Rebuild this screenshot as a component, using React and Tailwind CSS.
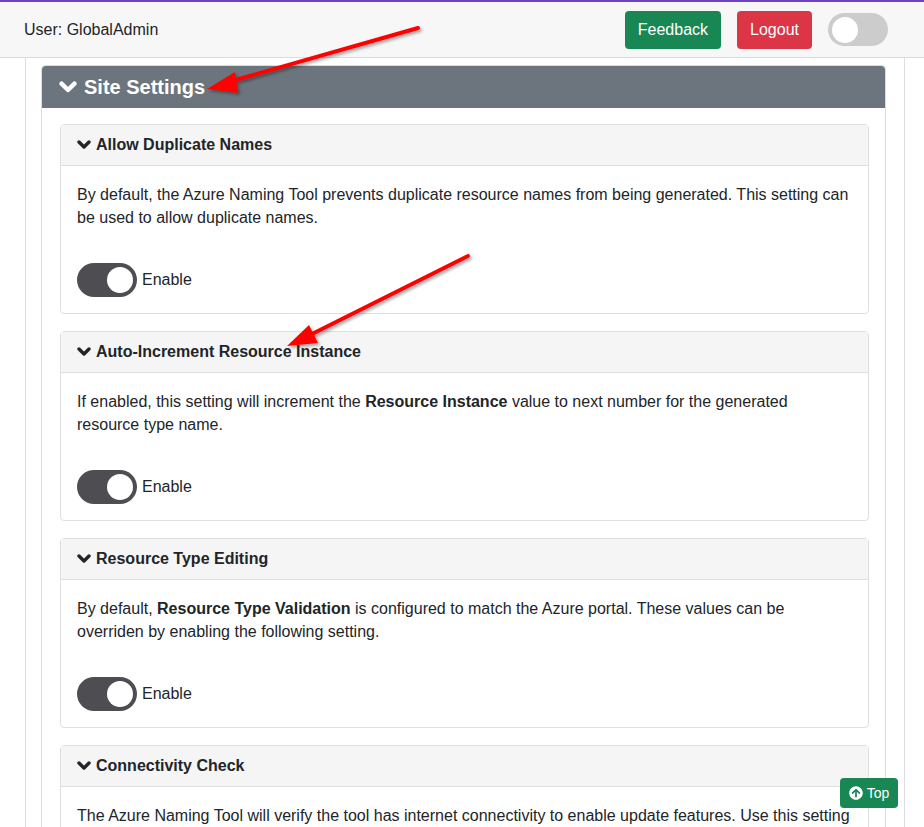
import React from 'react';
import { FaArrowCircleUp } from 'react-icons/fa';

function Chevron({ className }) {
  return (
    <svg className={className} viewBox="0 0 14 10" fill="none">
      <polyline points="2,2 7,7 12,2" stroke="currentColor" strokeWidth="3.4" strokeLinecap="round" strokeLinejoin="round" />
    </svg>
  );
}

function Toggle() {
  return (
    <div className="flex items-center">
      <div className="w-[60px] h-[34px] rounded-full bg-[#4d4d52] flex items-center justify-end pr-[4px]">
        <div className="w-[26px] h-[26px] rounded-full bg-white"></div>
      </div>
      <span className="ml-[5px]">Enable</span>
    </div>
  );
}

function SettingCard({ title, children }) {
  return (
    <div className="border border-[#dfdfdf] rounded-[4px] bg-white mb-[17px]">
      <div className="bg-[#f5f5f5] border-b border-[#dfdfdf] px-4 h-[41px] flex items-center font-bold">
        <Chevron className="w-[14px] h-[10px] mr-[5px]" />
        <span>{title}</span>
      </div>
      <div className="px-4 pt-[17px] pb-[16px]">
        <p className="leading-[23px]">{children}</p>
        <div className="mt-[34px]">
          <Toggle />
        </div>
      </div>
    </div>
  );
}

export default function App() {
  return (
    <div className="relative h-[827px] overflow-hidden bg-white text-[#212529] text-[16px]" style={{ fontFamily: '"Liberation Sans", Arial, sans-serif' }}>
      <div className="h-[2px] bg-[#6f42c1]"></div>
      <header className="h-[56px] bg-[#f7f7f7] border-b border-[#dcdcdc] flex items-center pl-6 pr-9">
        <span>User: GlobalAdmin</span>
        <div className="ml-auto flex items-center gap-4">
          <button className="h-[38px] px-[13px] rounded-[4px] bg-[#198754] text-white">Feedback</button>
          <button className="h-[38px] px-[13px] rounded-[4px] bg-[#dc3545] text-white">Logout</button>
          <div className="w-[60px] h-[33px] rounded-full bg-[#cccccc] flex items-center pl-[4px]">
            <div className="w-[26px] h-[26px] rounded-full bg-white"></div>
          </div>
        </div>
      </header>

      <div className="ml-[25px] mr-[19px] border-l border-r border-[#dedede] pl-[15px] pr-[18px] pt-[7px] h-full">
        <div className="border border-[#dcdcdc] rounded-[4px]">
          <div className="bg-[#6c757d] h-[42px] flex items-center pl-[17px] text-white font-bold text-[20px] rounded-t-[4px]">
            <Chevron className="w-[18px] h-[13px] mr-[7px]" />
            <span>Site Settings</span>
          </div>
          <div className="pl-[18px] pr-4 pt-[16px]">
            <SettingCard title="Allow Duplicate Names">
              By default, the Azure Naming Tool prevents duplicate resource names from being generated. This setting can be used to allow duplicate names.
            </SettingCard>
            <SettingCard title="Auto-Increment Resource Instance">
              If enabled, this setting will increment the <b>Resource Instance</b> value to next number for the generated resource type name.
            </SettingCard>
            <SettingCard title="Resource Type Editing">
              By default, <b>Resource Type Validation</b> is configured to match the Azure portal. These values can be overriden by enabling the following setting.
            </SettingCard>
            <SettingCard title="Connectivity Check">
              The Azure Naming Tool will verify the tool has internet connectivity to enable update features. Use this setting to disable the connectivity check if the tool is deployed in an isolated environment.
            </SettingCard>
          </div>
        </div>
      </div>

      <button className="absolute left-[840px] top-[778px] w-[58px] h-[30px] rounded-[4px] bg-[#198754] text-white text-[14px] flex items-center justify-center gap-[4px]">
        <FaArrowCircleUp className="w-[14px] h-[14px]" />
        <span>Top</span>
      </button>

      <svg className="absolute inset-0 pointer-events-none" width="924" height="827">
        <defs>
          <filter id="sh" x="-20%" y="-20%" width="140%" height="140%">
            <feDropShadow dx="2" dy="2" stdDeviation="1.5" floodColor="#000" floodOpacity="0.35" />
          </filter>
        </defs>
        <g filter="url(#sh)" fill="#ff0000" stroke="#ff0000" strokeLinecap="round">
          <line x1="418" y1="28" x2="232" y2="81" strokeWidth="4" />
          <polygon points="207,89 235,72 238,93" stroke="none" />
          <line x1="468" y1="256" x2="310" y2="335" strokeWidth="4" />
          <polygon points="287,346 309,325 318,343" stroke="none" />
        </g>
      </svg>
    </div>
  );
}
